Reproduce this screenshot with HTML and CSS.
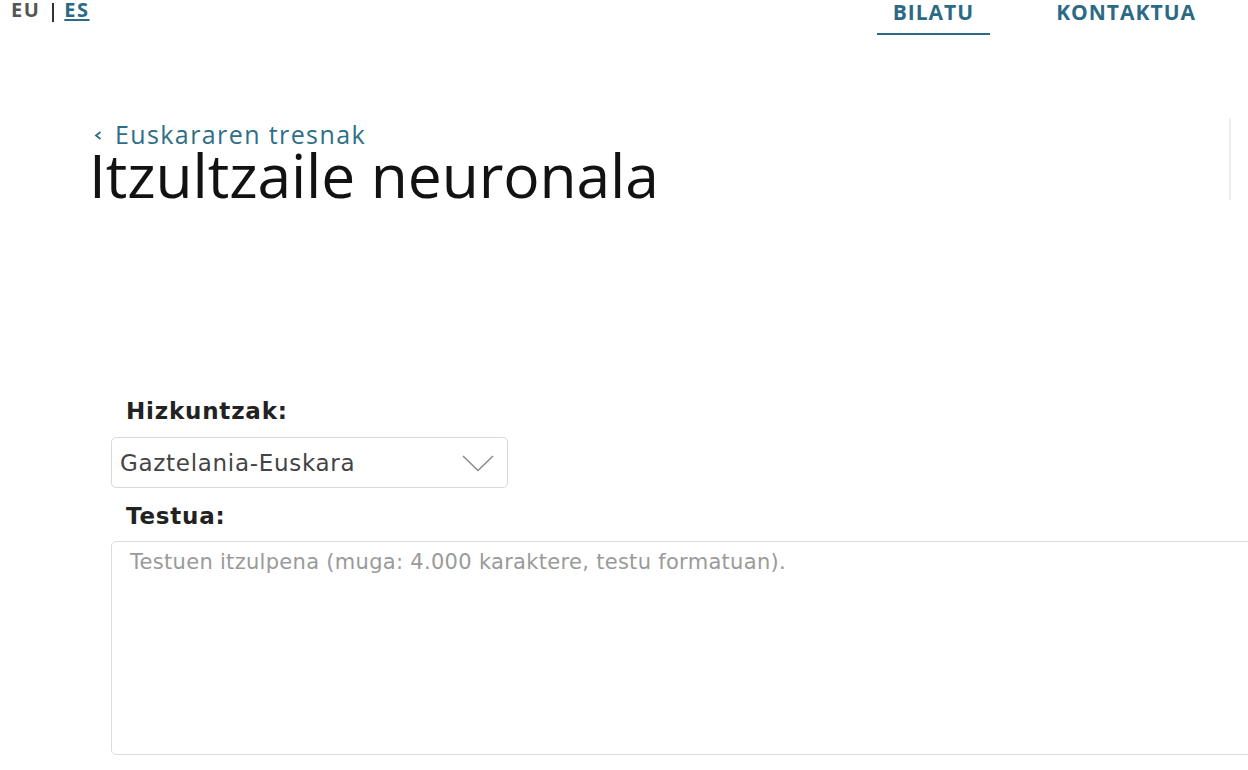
FILE: index.html
```html
<!DOCTYPE html>
<html lang="eu">
<head>
<meta charset="utf-8">
<title>Itzultzaile neuronala</title>
<link rel="stylesheet" href="styles.css">
</head>
<body>
<header class="topbar">
  <div class="langs"><span class="lang-cur">EU</span><span class="lang-sep"></span><a class="lang-link" href="#">ES</a></div>
  <nav class="nav">
    <a class="nav-item active" href="#">BILATU</a>
    <a class="nav-item" href="#">KONTAKTUA</a>
  </nav>
</header>
<section class="hero">
  <div class="hero-text">
    <a class="back" href="#"><svg class="back-chev" width="8" height="9" viewBox="0 0 8 9"><path d="M6.5 1 L2 4.5 L6.5 8" fill="none" stroke="#2e6f87" stroke-width="1.8"/></svg><span>Euskararen tresnak</span></a>
    <h1 class="title">Itzultzaile neuronala</h1>
  </div>
  <div class="hero-rule"></div>
</section>
<main class="form">
  <label class="label">Hizkuntzak:</label>
  <div class="select">
    <span class="select-text">Gaztelania-Euskara</span>
    <svg class="select-chev" width="32" height="17" viewBox="0 0 32 17"><path d="M1 1 L16 15.5 L31 1" fill="none" stroke="#8a8a8a" stroke-width="1.5"/></svg>
  </div>
  <label class="label label-2">Testua:</label>
  <div class="textarea"><span class="placeholder">Testuen itzulpena (muga: 4.000 karaktere, testu formatuan).</span></div>
</main>
</body>
</html>
```

FILE: styles.css
```css
html, body {
  margin: 0;
  padding: 0;
  background: #fff;
  overflow: hidden;
}
body {
  width: 1248px;
  height: 770px;
  font-family: "Open Sans", "Liberation Sans", sans-serif;
}
.topbar {
  display: flex;
  justify-content: space-between;
  align-items: flex-start;
  height: 40px;
}
.langs {
  display: flex;
  align-items: center;
  margin-top: -4px;
  padding-left: 11px;
  font-weight: 700;
  font-size: 20px;
  line-height: 28px;
  letter-spacing: 1.5px;
}
.lang-cur { color: #555; }
.lang-sep {
  width: 2px;
  height: 19px;
  background: #333;
  margin: 4px 10px 0 12px;
}
.lang-link {
  color: #2b6a85;
  text-decoration: underline;
  text-decoration-thickness: 2px;
  text-underline-offset: 2px;
}
.nav {
  display: flex;
  margin-top: -2px;
  padding-right: 36px;
}
.nav-item {
  color: #2b6a85;
  font-weight: 700;
  font-size: 21px;
  line-height: 28px;
  letter-spacing: 1px;
  text-decoration: none;
  padding: 0 16px 7px;
  margin-left: 50px;
  border-bottom: 2px solid transparent;
}
.nav-item.active { border-bottom-color: #2b6a85; }
.hero {
  display: flex;
  justify-content: space-between;
  margin-top: 79px;
  height: 100px;
}
.hero-text {
  padding-left: 89px;
}
.back {
  display: flex;
  align-items: center;
  color: #2e6f87;
  font-size: 25px;
  line-height: 30px;
  letter-spacing: 1.4px;
  text-decoration: none;
}
.back-chev {
  margin: 2px 13px 0 5px;
}
.title {
  margin: -9px 0 0;
  font-size: 60.5px;
  font-weight: 400;
  line-height: 70px;
  color: #121212;
  letter-spacing: -0.1px;
}
.hero-rule {
  width: 2px;
  height: 82px;
  margin-top: -1px;
  margin-right: 17px;
  background: #ededed;
}
.form {
  padding-left: 111px;
  margin-top: 177px;
  font-family: "DejaVu Sans", Verdana, sans-serif;
}
.label {
  display: block;
  font-weight: 700;
  font-size: 23px;
  line-height: 30px;
  letter-spacing: 0.8px;
  color: #222;
  padding-left: 15px;
}
.select {
  display: flex;
  align-items: center;
  justify-content: space-between;
  box-sizing: border-box;
  width: 397px;
  height: 51px;
  margin-top: 11px;
  padding: 1px 13px 0 8px;
  border: 1px solid #d9d9d9;
  border-radius: 5px;
  color: #444;
  font-size: 23px;
  letter-spacing: 0.7px;
}
.label-2 { margin-top: 13px; }
.textarea {
  box-sizing: border-box;
  width: 1160px;
  height: 214px;
  margin-top: 10px;
  padding: 8px 18px;
  border: 1px solid #dcdcdc;
  border-radius: 5px;
  color: #9a9a9a;
  font-size: 21px;
  line-height: 24px;
  letter-spacing: 0.3px;
}
```
